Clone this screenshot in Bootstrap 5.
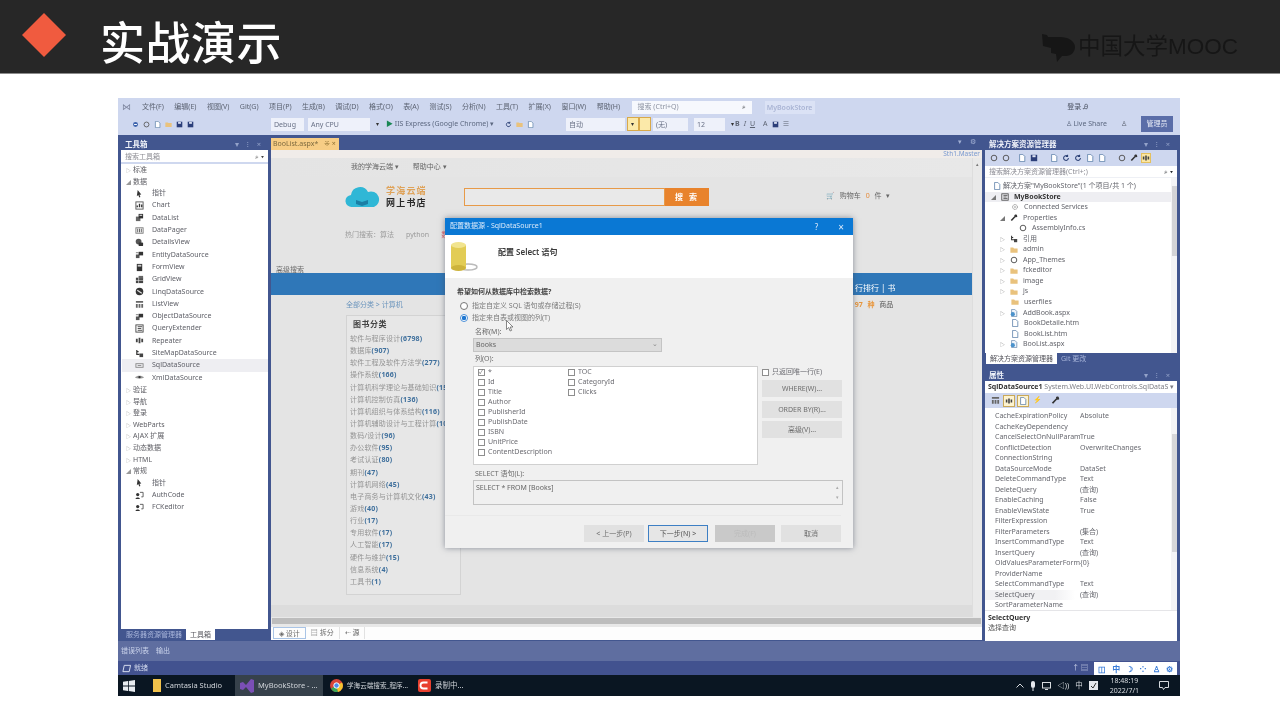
<!DOCTYPE html>
<html lang="zh-CN">
<head>
<meta charset="utf-8">
<title>实战演示</title>
<link href="https://cdn.jsdelivr.net/npm/bootstrap@5.3.0/dist/css/bootstrap.min.css" rel="stylesheet">
<style>
html,body{margin:0;height:720px;overflow:hidden;background:#fff}
body{font-family:"Noto Sans","Noto Sans CJK SC",sans-serif;font-size:7px;line-height:1.2;color:#555}
svg{display:block;flex:none}
.slide-head{height:74px;background:#272727;border-bottom:1px solid #8b8b8b;padding-left:22px;filter:blur(.5px)}
.rhomb{width:44px;height:44px;flex:none;background:#f05b3f;clip-path:polygon(50% 0,100% 50%,50% 100%,0 50%);margin-right:34px;margin-top:-3px}
.slide-title{font-family:"Noto Sans CJK SC",sans-serif;font-size:45px;font-weight:500;line-height:1;color:#fff;letter-spacing:.5px;margin-top:8px}
.wmark{margin-left:auto;margin-right:42px;margin-top:20px;color:#161616;font-family:"Liberation Sans","Noto Sans CJK SC",sans-serif;font-size:22.5px}
.vsw{position:relative;width:1062px;height:597px;margin:24px 0 0 118px;background:#42568f;filter:blur(.55px)}
.vs-menu{height:18px;background:#ced7ef;padding-left:4px}
.vs-menu .mi{margin-right:10.5px;color:#5c6372}
.vs-logo{width:10px;margin-right:10px;color:#7f87a0;font-size:9px}
.vs-search{width:120px;height:13px;background:#f6f8fd;margin-left:1px;padding:0 6px;color:#8d93a2}
.vs-proj{width:50px;height:13px;background:#dbe2f5;margin-left:13px;color:#a9b4d4;text-align:center;line-height:13px;font-weight:600}
.vs-login{margin-left:auto;margin-right:92px;color:#4e5565}
.vs-tool{height:19px;background:#ced7ef;padding:0 0 3px 14px;color:#5c6372}
.tcombo{height:13px;background:#eef1fa;padding:0 3px;line-height:13px;color:#687085;position:relative}
.tcombo::after{content:"▾";position:absolute;right:-9px;top:0;font-size:6px;color:#333}
.c-deb{width:33px;margin-left:73px}.c-cpu{width:62px;margin-left:4px;margin-right:16px}
.c-auto{width:59px;margin-left:28px;margin-right:2px}.c-none{width:35px;margin-left:2px;margin-right:6px}.c-size{width:31px;margin-right:10px}
.iis{width:114px;color:#5c6880}
.tg{width:7px;height:7px;margin-right:4px}
.tg2{margin-left:5px}
.tsel{height:14px;width:12px;background:#fbe9a9;border:1px solid #d8a94a}
.live{margin-left:auto;margin-right:14px;color:#5c6880}
.preview{width:32px;height:16px;background:#5a6da8;color:#e6eaf6;text-align:center;line-height:16px;margin-right:7px;margin-left:14px}
.vs-main{height:506px;padding:0 3px}
.dock-l{width:147px;margin-right:3px;background:#fff;flex:none}
.ptitle{height:15px;flex:none;background:#42568f;color:#eef1f9;font-weight:700;padding:4px 4px 0;font-size:7.5px;line-height:10px}
.ptitle b{margin-left:auto;font-weight:400;color:#93a2c9;letter-spacing:3px}
.psearch{height:14px;flex:none;background:#fff;border-bottom:2px solid #cfd8ef;padding:1px 4px 0;color:#8b8b92;line-height:11px}
.psearch i{margin-left:auto;font-style:normal;color:#444}
.tb-list{flex:1;background:#fff;padding-top:0;border-left:1px solid #fff}
.tb-cat{height:11.6px;line-height:11.6px;padding-left:4px;color:#5d5d63}
.tb-cat span{display:inline-block;width:7px;font-size:5px;color:#999}
.tb-it{height:12.3px;padding-left:13px;color:#5f6068}
.tb-it svg{width:9px;height:9px;margin-right:8px}
.tb-sel{background:#eeeef2}
.ptabs{height:12px;flex:none;background:#42568f;line-height:12px;padding-left:1px}
.ptabs span{padding:1px 4px 0;color:#a8b5da;height:11px;line-height:10px}
.ptabs .on{background:#fff;color:#55555c}
.center{width:711px;flex:none;background:#42568f}
.tabrow{height:15px;padding-top:3px;flex:none}
.doc-tab{width:68px;height:12px;background:#f7cd85;padding-left:2px;color:#7d6a3f;line-height:12px}
.doc-tab b{font-weight:400;margin-left:6px;color:#8d6f32}
.tab-r{margin-left:auto;color:#a2b0d4;letter-spacing:3px;margin-right:3px}
.strip{height:8px;flex:none;background:#f0ece9;text-align:right;color:#7a9ad0;padding-right:2px;line-height:8px;font-size:6.5px}
.design{height:459px;flex:none;background:#e4e4e4}
.webpg{flex:1;overflow:hidden}
.vscroll{width:10px;background:#e9e9e9;border-left:1px solid #ddd;text-align:center;color:#777;font-size:5px;padding-top:3px}
.w-top{height:19px;flex:none;padding-left:80px;color:#666;background:linear-gradient(90deg,#e4e4e4,#e8e8e8)}
.w-top span{margin-right:14px}
.w-logo{height:29px;flex:none;padding-left:74px;margin-top:5px}
.w-names{margin-left:5px;width:78px;font-weight:700;font-size:9px;line-height:12px;letter-spacing:1.2px;font-family:"Noto Sans CJK SC",sans-serif}
.w-names em{font-style:normal;color:#dfa35a;display:block}
.w-names u{text-decoration:none;color:#2a2a2a;display:block}
.w-input{width:201px;height:18px;border:1px solid #e79a48;background:#e9e9e9}
.w-btn{width:44px;height:18px;background:#e8832c;color:#fff;text-align:center;line-height:18px;font-weight:700;font-size:8px;letter-spacing:2px}
.w-cart{margin-left:117px;color:#666;font-size:7px;word-spacing:3px}
.w-cart i{font-style:normal;color:#e58a3a}
.w-hot{height:10px;flex:none;margin-top:20px;padding-left:74px;color:#9a9a9a}
.w-hot span{margin-right:12px}
.w-hot .red{color:#e0606a}
.w-adv{height:10px;flex:none;margin-top:24px;padding-left:5px;color:#6a6a6a;line-height:10px;margin-bottom:-2px}
.w-band{height:22px;flex:none;background:#2f77b8;color:#fff;font-size:8px;padding-left:584px;line-height:30px;overflow:hidden}
.w-sub{padding-left:75px;height:20px;flex:none;color:#6b95bd;line-height:19px}
.w-sub2{margin-left:452px;color:#555;word-spacing:3px}
.w-sub2 b{color:#e8963c;font-weight:700}
.w-box{margin-left:75px;width:115px;height:280px;flex:none;border:1px solid #d3d3d3;padding:2px 0 0 3px;background:#e7e7e7;overflow:hidden}
.w-box h6{font-size:8px;margin:0 0 3px 3px;font-weight:700;color:#444;line-height:12px;font-family:"Noto Sans CJK SC",sans-serif;letter-spacing:.5px}
.w-box div{height:12.15px;white-space:nowrap;color:#949494;line-height:12.15px;letter-spacing:.2px}
.w-box b{color:#3e6f9c;font-weight:700}
.w-foot{margin-top:auto;height:12px;flex:none;background:#dcdcdc}
.hsc{height:10px;flex:none;background:#e8e8e8;padding:1px 1px 3px;color:#777;font-size:5px}
.hsc i{display:block;width:100%;height:6px;background:#bdbdbd}
.dtabs{height:13px;flex:none;background:#fdfdfd;padding-left:2px;color:#6a6a6a}
.dtabs span{padding:0 5px;height:12px;line-height:11px;border-right:1px solid #e2e2e2}
.dtabs .on{border:1px solid #a9c4e6}
.dock-r{width:192px;margin-left:3px;flex:none}
.sol{height:203px;flex:none;background:#fff}
.st-bar{height:16px;flex:none;background:#ced7ef;padding-left:5px}
.st-bar svg{width:8px;height:8px;margin-right:4px}
.st-on{background:#fbe6a3;outline:1px solid #e4c05f}
.psearch2{height:12px;flex:none;background:#fff;padding:1px 4px 0;line-height:10px;color:#8c8c94;border-bottom:1px solid #eef0f5}
.tree{flex:1;position:relative;overflow:hidden;padding-top:3px}
.tr{height:10.55px;line-height:10.55px;color:#63646b;white-space:nowrap}
.tr>i{display:inline-block;font-style:normal;width:7px;color:#777;font-size:5px;text-align:center}
.tr svg{width:8px;height:8px;margin-right:5px}
.ind1{padding-left:5px}.ind2{padding-left:14px}.ind3{padding-left:26px}
.sol-r{padding-left:8px}.sol-r svg{margin-right:2px}
.tr-sel{background:#eeeef2;color:#333;font-weight:700}
.tr-scr{position:absolute;right:0;top:0;bottom:0;width:6px;background:#f4f4f6}
.tr-scr i{position:absolute;left:1px;top:8px;width:5px;height:70px;background:#d3d3d6}
.gap4{height:3px;flex:none}
.ptabs2{height:11px;line-height:10px}
.ptitle2{height:14px;padding-top:3px}
.prop{height:260px;flex:none;background:#fff}
.pr-combo{height:12px;flex:none;padding:0 3px;line-height:12px;white-space:nowrap;overflow:hidden;color:#7d7e85}
.pr-combo b{color:#333}
.pr-bar{height:15px;flex:none;background:#ced7ef;padding-left:4px}
.pr-bar span{display:flex;align-items:center;justify-content:center;width:12px;height:12px;margin-right:2px}
.pr-bar .on{background:#fdf3d0;border:1px solid #c9a95a}
.pr-grid{height:202px;flex:none;overflow:hidden;position:relative;padding-top:3px}
.pr-row{height:10.5px;line-height:10.5px;padding-left:10px;color:#66676e;white-space:nowrap}
.pr-row span:first-child{width:85px;flex:none}
.pr-sel{background:linear-gradient(90deg,#f1f1f3,#f1f1f3 70px,#fff 90px)}
.pr-sc{position:absolute;right:0;top:0;bottom:0;width:6px;background:#f4f4f6}
.pr-sc i{position:absolute;left:1px;top:26px;width:5px;height:118px;background:#d6d6d9}
.pr-desc{flex:1;border-top:1px solid #e5e5e8;padding:2px 3px;color:#555;line-height:10px}
.pr-desc b{display:block;color:#333;font-weight:700}
.bot-row{height:20px;background:#5f6ea0;color:#c9d2ea;padding-left:3px}
.bot-row span{margin-right:7px}
.stat{height:14px;background:#42528f;color:#d5dcf0;padding-left:4px}
.stat svg{width:9px;height:9px;margin-right:3px}
.ime{width:83px;height:13px;background:#fff;margin-right:3px;justify-content:space-between;padding:0 4px;color:#3b7dd8;font-weight:700;font-size:8px;line-height:13px}
.stat .upa{margin-left:auto;color:#d5dcf0;margin-right:6px}
.taskbar{height:21px;background:#0a1622;color:#d0d4d9;padding-left:5px;font-size:7.5px}
.tk{height:21px;padding:0 3px;white-space:nowrap;flex:none}
.tk svg{margin-right:4px}
.tk1{width:100px;padding-left:18px}
.tk2{width:88px;background:#36414b;padding-left:5px}
.tk3{width:95px;padding-left:7px;font-size:6.6px}
.tk4{width:60px;padding-left:0}
.tray{margin-left:auto;gap:6px;margin-right:11px;color:#d6dade}
.clock{text-align:center;line-height:10px;font-size:7px;margin:0 14px 0 6px}
.dlg{position:absolute;left:327px;top:120px;width:408px;height:330px;background:#f0f0f0;box-shadow:0 0 6px rgba(60,70,90,.55);color:#555}
.dlg-t{height:17px;flex:none;background:#0a78d4;color:#dbeafa;padding:0 9px 0 5px}
.dlg-t i{margin-left:auto;font-style:normal;font-size:8px}
.dlg-t em{font-style:normal;margin-left:20px;font-size:10px}
.dlg-h{height:43px;flex:none;background:#fff;padding-left:5px;color:#3a3a3a;font-size:8px;font-weight:600}
.dlg-h svg{width:32px;height:32px;margin-right:16px}
.dlg-h span{margin-bottom:10px}
.dlg-b{padding:9px 0 0 12px;height:270px;flex:none}
.q{height:10px;line-height:10px;font-weight:700;color:#444;margin-bottom:3px}
.rad{height:12px;padding-left:3px;color:#7b7b7b}
.rc{width:8px;height:8px;border:1px solid #777;border-radius:50%;margin-right:4px;background:#fff;flex:none}
.rc.on{border-color:#4a90d9;background:radial-gradient(circle,#1f77d0 0 2px,#fff 2.4px)}
.ind{margin-left:16px}
.lb{height:10px;line-height:10px;margin-top:3px;color:#6b6b6b;margin-left:2px}
.lb2{margin-top:2px}
.lb3{margin-top:4px;margin-bottom:1px}
.sel-b{width:189px;height:14px;background:#dcdcdc;border:1px solid #c4c4c4;margin-top:1px;padding:0 2px;line-height:12px;color:#666;position:relative}
.sel-b::after{content:"⌄";position:absolute;right:3px;top:-1px;color:#888}
.lst-wrap{margin-top:2px;height:99px}
.lst{width:285px;height:99px;background:#fff;border:1px solid #d0d0d0;padding:0 0 0 4px}
.lst-c{width:90px}
.ck{height:10px;line-height:10px;color:#6c6c72;white-space:nowrap}
.ck i{display:block;width:7px;height:7px;border:1px solid #8e8e8e;margin-right:3px;background:#fff;font-style:normal;color:#666;font-size:6px;line-height:5px}
.rcol{margin-left:4px;width:81px}
.rcol .ck{margin-top:1px;margin-bottom:3px}
.dbtn{display:block;width:80px;height:17px;margin-bottom:3.5px;background:#e1e1e1;border:0;border-radius:0;padding:0;font-size:7px;line-height:17px;color:#6e6e6e}
.ta{width:370px;height:25px;background:#f0f0f0;border:1px solid #c3c3c3;padding:2px;color:#666;line-height:9px;position:relative}
.ta i{position:absolute;right:3px;font-style:normal;font-size:5px;color:#aaa}
.ta .t1{top:2px}.ta .t2{bottom:2px}
.sep{height:1px;background:#e9e9e9;margin:10px 12px 9px -12px}
.dfoot{margin-left:127px;gap:4px}
.nbtn{width:60px;height:17px;background:#e1e1e1;border:0;border-radius:0;padding:0;font-size:7px;line-height:17px;color:#6e6e6e}
.nbtn.pri{border:1px solid #3d7fc4;line-height:15px;color:#555;background:#e6e6e6}
.nbtn.dis{background:#c9c9c9;color:#bcbcbc;margin-left:3px}
.nbtn.can{margin-left:2px}
.cursor{position:absolute;left:61px;top:102px;width:8px;height:12px}
</style>
</head>
<body>
<svg width="0" height="0" class="position-absolute">
<defs>
<symbol id="i-ptr" viewBox="0 0 10 10"><path d="M3 1l4 5-2 .3L6 9 4.800 9.400 3.600 6.600 2 8z" fill="#333"/></symbol>
<symbol id="i-chart" viewBox="0 0 10 10"><rect x="1" y="1" width="8" height="8" fill="none" stroke="#555"/><path d="M2.500 7V5M5 7V3M7.500 7V4" stroke="#333" stroke-width="1.500"/></symbol>
<symbol id="i-list" viewBox="0 0 10 10"><rect x="1" y="4" width="5" height="5" fill="#666"/><rect x="4" y="1" width="5" height="5" fill="#333"/><rect x="5" y="2" width="3" height="1" fill="#fff"/></symbol>
<symbol id="i-pager" viewBox="0 0 10 10"><rect x="1" y="2" width="8" height="6" fill="none" stroke="#777"/><path d="M3 3v4M5 3v4M7 3v4" stroke="#555"/></symbol>
<symbol id="i-detail" viewBox="0 0 10 10"><circle cx="4" cy="4" r="3.200" fill="#555"/><rect x="4" y="5" width="5" height="4" rx="1" fill="#333"/></symbol>
<symbol id="i-ent" viewBox="0 0 10 10"><rect x="1" y="5" width="4" height="4" fill="#555"/><rect x="4" y="2" width="5" height="4" fill="#333"/><path d="M1 3h3" stroke="#777"/></symbol>
<symbol id="i-form" viewBox="0 0 10 10"><rect x="2" y="1" width="6" height="8" fill="#333"/><rect x="3" y="2" width="4" height="2" fill="#ccc"/></symbol>
<symbol id="i-grid" viewBox="0 0 10 10"><rect x="1" y="3" width="8" height="6" fill="#444"/><rect x="4" y="1" width="5" height="3" fill="#666"/><path d="M1 6h8M4 3v6" stroke="#fff" stroke-width=".6"/></symbol>
<symbol id="i-linq" viewBox="0 0 10 10"><circle cx="5" cy="5" r="4.200" fill="#333"/><path d="M2.500 3.500L7.500 7" stroke="#ddd" stroke-width="1.400"/></symbol>
<symbol id="i-lv" viewBox="0 0 10 10"><path d="M1 1h8v2H1zM1 4.500h2v4H1zM4 4.500h2v4H4zM7 4.500h2v4H7z" fill="#666"/></symbol>
<symbol id="i-qe" viewBox="0 0 10 10"><rect x="1" y="1" width="8" height="8" fill="none" stroke="#444"/><path d="M3 3h5M3 5h4M3 7h5" stroke="#444"/></symbol>
<symbol id="i-rep" viewBox="0 0 10 10"><path d="M1 3h2v4H1zM4 2h2v6H4zM7 3h2v4H7z" fill="#444"/></symbol>
<symbol id="i-site" viewBox="0 0 10 10"><path d="M2 1v5h3M2 3h2" fill="none" stroke="#333" stroke-width="1.300"/><rect x="5" y="5" width="4" height="4" fill="#444"/></symbol>
<symbol id="i-sql" viewBox="0 0 10 10"><rect x="1" y="3" width="8" height="4" fill="none" stroke="#888"/><path d="M3 5h4" stroke="#888"/></symbol>
<symbol id="i-xml" viewBox="0 0 10 10"><path d="M0 5c2-2.500 8-2.500 10 0-2 1.500-8 1.500-10 0z" fill="#999"/><circle cx="5" cy="4.500" r="1.300" fill="#333"/></symbol>
<symbol id="i-uc" viewBox="0 0 10 10"><circle cx="3" cy="4" r="1.800" fill="#333"/><path d="M.5 9c0-2.500 5-2.500 5 0z" fill="#333"/><path d="M5.500 1.500h3.500v5H7" fill="none" stroke="#555"/></symbol>
<symbol id="i-folder" viewBox="0 0 10 10"><path d="M.5 2h3.500l1 1h4.500v5.500H.5z" fill="#e9c27d"/></symbol>
<symbol id="i-page" viewBox="0 0 10 10"><path d="M2 .5h4l2.500 2.500v6.500H2z" fill="#fff" stroke="#5a7fa8"/></symbol>
<symbol id="i-aspx" viewBox="0 0 10 10"><path d="M2 .5h4l2.500 2.500v6.500H2z" fill="#eef4fb" stroke="#6f8fb3"/><circle cx="3.500" cy="6.500" r="2.600" fill="#4a92cc"/></symbol>
<symbol id="i-wrench" viewBox="0 0 10 10"><path d="M8.800 1.200L7 3 6 2.500l-.3-1C7 .6 8 .6 8.800 1.200zM5.700 2.400l1.300 1.300-4.600 5L.9 7.400z" fill="#333"/><path d="M6 .8a2.400 2.400 0 0 1 3 3l-2 .3-1.500-1.500z" fill="#333"/></symbol>
<symbol id="i-theme" viewBox="0 0 10 10"><circle cx="5" cy="5" r="3.500" fill="none" stroke="#555" stroke-width="1.200"/></symbol>
<symbol id="i-gear" viewBox="0 0 10 10"><circle cx="5" cy="5" r="3" fill="none" stroke="#8b8b8b" stroke-width="1.200" stroke-dasharray="1.500 .7"/><circle cx="5" cy="5" r="1" fill="#8b8b8b"/></symbol>
<symbol id="i-circ" viewBox="0 0 10 10"><circle cx="5" cy="5" r="3.500" fill="#3d63ad"/><rect x="3" y="4.300" width="4" height="1.400" fill="#fff"/></symbol>
<symbol id="i-refresh" viewBox="0 0 10 10"><path d="M8 5a3 3 0 1 1-1-2.200M7 1v2.200H4.800" fill="none" stroke="#2a3f74" stroke-width="1.300"/></symbol>
<symbol id="i-save" viewBox="0 0 10 10"><rect x="1" y="1" width="8" height="8" fill="#2c3f7a"/><rect x="3" y="1.500" width="4" height="2.500" fill="#dfe5f5"/></symbol>
<symbol id="i-win" viewBox="0 0 12 12"><path d="M0 1.800L5 1v4.600H0zM5.800.9L12 0v5.600H5.800zM0 6.400h5V11L0 10.200zM5.800 6.400H12V12l-6.200-.9z" fill="#e8ecf1"/></symbol>
<symbol id="i-stat" viewBox="0 0 10 10"><path d="M2.500 1.500h7l-1.500 7h-7z" fill="none" stroke="#e6ebf8"/></symbol>
</defs>
</svg>

<header class="slide-head d-flex align-items-center">
  <div class="rhomb"></div>
  <div class="slide-title">实战演示</div>
  <div class="wmark d-flex align-items-center">
    <svg width="37" height="30" viewBox="0 0 37 30"><path d="M1 2l5 1 1 2h12c8 0 15 4 15 10 0 5-4 9-9 9h-4l-5 6-1-8-5-1v-5l-8-2z" fill="#161616"/></svg>
    <span>中国大学MOOC</span>
  </div>
</header>

<main class="vsw">
  <div class="vs-menu d-flex align-items-center">
    <div class="vs-logo">⋈</div>
    <span class="mi">文件(F)</span><span class="mi">编辑(E)</span><span class="mi">视图(V)</span><span class="mi">Git(G)</span><span class="mi">项目(P)</span><span class="mi">生成(B)</span><span class="mi">调试(D)</span><span class="mi">格式(O)</span><span class="mi">表(A)</span><span class="mi">测试(S)</span><span class="mi">分析(N)</span><span class="mi">工具(T)</span><span class="mi">扩展(X)</span><span class="mi">窗口(W)</span><span class="mi">帮助(H)</span>
    <div class="vs-search d-flex align-items-center">搜索 (Ctrl+Q)<span class="ms-auto text-dark">⌕</span></div>
    <div class="vs-proj">MyBookStore</div>
    <div class="vs-login">登录 Ꭿ</div>
  </div>

  <div class="vs-tool d-flex align-items-center">
    <svg class="tg"><use href="#i-circ"/></svg><svg class="tg"><use href="#i-theme"/></svg>
    <svg class="tg"><use href="#i-page"/></svg><svg class="tg"><use href="#i-folder"/></svg><svg class="tg"><use href="#i-save"/></svg><svg class="tg"><use href="#i-save"/></svg>
    <div class="tcombo c-deb">Debug</div>
    <div class="tcombo c-cpu">Any CPU</div>
    <div class="iis"><span class="text-success">▶</span> IIS Express (Google Chrome) ▾</div>
    <svg class="tg tg2"><use href="#i-refresh"/></svg><svg class="tg"><use href="#i-folder"/></svg><svg class="tg"><use href="#i-page"/></svg>
    <div class="tcombo c-auto">自动</div>
    <div class="tsel"></div><div class="tsel"></div>
    <div class="tcombo c-none">(无)</div>
    <div class="tcombo c-size">12</div>
    <b class="me-1">B</b><i class="me-1">I</i><u class="me-2">U</u><span class="me-1">A</span><svg class="tg"><use href="#i-save"/></svg><span>≡</span>
    <div class="live">♙ Live Share</div><span>♙</span>
    <div class="preview">管理员</div>
  </div>

  <div class="vs-main d-flex">
    <aside class="dock-l d-flex flex-column">
      <div class="ptitle d-flex">工具箱<b>▾ ⁝ ×</b></div>
      <div class="psearch d-flex">搜索工具箱<i>⌕ ▾</i></div>
      <div class="tb-list">
        <div class="tb-cat"><span>▷</span>标准</div>
        <div class="tb-cat"><span>◢</span>数据</div>
        <div class="tb-it d-flex align-items-center"><svg><use href="#i-ptr"/></svg>指针</div>
        <div class="tb-it d-flex align-items-center"><svg><use href="#i-chart"/></svg>Chart</div>
        <div class="tb-it d-flex align-items-center"><svg><use href="#i-list"/></svg>DataList</div>
        <div class="tb-it d-flex align-items-center"><svg><use href="#i-pager"/></svg>DataPager</div>
        <div class="tb-it d-flex align-items-center"><svg><use href="#i-detail"/></svg>DetailsView</div>
        <div class="tb-it d-flex align-items-center"><svg><use href="#i-ent"/></svg>EntityDataSource</div>
        <div class="tb-it d-flex align-items-center"><svg><use href="#i-form"/></svg>FormView</div>
        <div class="tb-it d-flex align-items-center"><svg><use href="#i-grid"/></svg>GridView</div>
        <div class="tb-it d-flex align-items-center"><svg><use href="#i-linq"/></svg>LinqDataSource</div>
        <div class="tb-it d-flex align-items-center"><svg><use href="#i-lv"/></svg>ListView</div>
        <div class="tb-it d-flex align-items-center"><svg><use href="#i-ent"/></svg>ObjectDataSource</div>
        <div class="tb-it d-flex align-items-center"><svg><use href="#i-qe"/></svg>QueryExtender</div>
        <div class="tb-it d-flex align-items-center"><svg><use href="#i-rep"/></svg>Repeater</div>
        <div class="tb-it d-flex align-items-center"><svg><use href="#i-site"/></svg>SiteMapDataSource</div>
        <div class="tb-it tb-sel d-flex align-items-center"><svg><use href="#i-sql"/></svg>SqlDataSource</div>
        <div class="tb-it d-flex align-items-center"><svg><use href="#i-xml"/></svg>XmlDataSource</div>
        <div class="tb-cat"><span>▷</span>验证</div>
        <div class="tb-cat"><span>▷</span>导航</div>
        <div class="tb-cat"><span>▷</span>登录</div>
        <div class="tb-cat"><span>▷</span>WebParts</div>
        <div class="tb-cat"><span>▷</span>AJAX 扩展</div>
        <div class="tb-cat"><span>▷</span>动态数据</div>
        <div class="tb-cat"><span>▷</span>HTML</div>
        <div class="tb-cat"><span>◢</span>常规</div>
        <div class="tb-it d-flex align-items-center"><svg><use href="#i-ptr"/></svg>指针</div>
        <div class="tb-it d-flex align-items-center"><svg><use href="#i-uc"/></svg>AuthCode</div>
        <div class="tb-it d-flex align-items-center"><svg><use href="#i-uc"/></svg>FCKeditor</div>
      </div>
      <div class="ptabs d-flex"><span>服务器资源管理器</span><span class="on">工具箱</span></div>
    </aside>

    <section class="center d-flex flex-column">
      <div class="tabrow d-flex">
        <div class="doc-tab">BooList.aspx*<b>⁜ ×</b></div>
        <div class="tab-r">▾ ⚙</div>
      </div>
      <div class="strip">Sth1.Master</div>
      <div class="design d-flex">
        <div class="webpg d-flex flex-column">
          <div class="w-top d-flex align-items-center"><span>我的学海云端 ▾</span><span>帮助中心 ▾</span></div>
          <div class="w-logo d-flex align-items-center">
            <svg width="36" height="22" viewBox="0 0 36 22"><path d="M7 21a6 6 0 0 1-1-12 9 9 0 0 1 17-3 7 7 0 0 1 6 15z" fill="#2fb7d6"/><path d="M11 14l6 2 6-2v4l-6 2-6-2z" fill="#1a7fa5"/></svg>
            <div class="w-names"><em>学海云端</em><u>网上书店</u></div>
            <div class="w-input"></div><div class="w-btn">搜 索</div>
            <div class="w-cart">🛒 购物车 <i>0</i> 件 ▾</div>
          </div>
          <div class="w-hot d-flex"><span>热门搜索：算法</span><span>python</span><span class="red">数字</span></div>
          <div class="w-adv">高级搜索</div>
          <div class="w-band">行排行 | 书</div>
          <div class="w-sub d-flex"><span>全部分类 &gt; 计算机</span><span class="w-sub2"><b>97 种</b> 商品</span></div>
          <div class="w-box">
            <h6>图书分类</h6>
            <div>软件与程序设计<b>(6798)</b></div>
            <div>数据库<b>(907)</b></div>
            <div>软件工程及软件方法学<b>(277)</b></div>
            <div>操作系统<b>(166)</b></div>
            <div>计算机科学理论与基础知识<b>(158)</b></div>
            <div>计算机控制仿真<b>(136)</b></div>
            <div>计算机组织与体系结构<b>(116)</b></div>
            <div>计算机辅助设计与工程计算<b>(103)</b></div>
            <div>数码/设计<b>(96)</b></div>
            <div>办公软件<b>(95)</b></div>
            <div>考试认证<b>(80)</b></div>
            <div>期刊<b>(47)</b></div>
            <div>计算机网络<b>(45)</b></div>
            <div>电子商务与计算机文化<b>(43)</b></div>
            <div>游戏<b>(40)</b></div>
            <div>行业<b>(17)</b></div>
            <div>专用软件<b>(17)</b></div>
            <div>人工智能<b>(17)</b></div>
            <div>硬件与维护<b>(15)</b></div>
            <div>信息系统<b>(4)</b></div>
            <div>工具书<b>(1)</b></div>
          </div>
          <div class="w-foot"></div>
        </div>
        <div class="vscroll">▴</div>
      </div>
      <div class="hsc"><i></i></div>
      <div class="dtabs d-flex"><span class="on">◈ 设计</span><span>▤ 拆分</span><span>⇠ 源</span></div>
    </section>

    <aside class="dock-r d-flex flex-column">
      <div class="ptitle d-flex">解决方案资源管理器<b>▾ ⁝ ×</b></div>
      <div class="sol d-flex flex-column">
        <div class="st-bar d-flex align-items-center"><svg><use href="#i-theme"/></svg><svg><use href="#i-theme"/></svg><svg class="ms-1"><use href="#i-page"/></svg><svg><use href="#i-save"/></svg><svg class="ms-2"><use href="#i-page"/></svg><svg><use href="#i-refresh"/></svg><svg><use href="#i-refresh"/></svg><svg><use href="#i-page"/></svg><svg><use href="#i-page"/></svg><svg class="ms-2"><use href="#i-theme"/></svg><svg><use href="#i-wrench"/></svg><svg class="st-on"><use href="#i-rep"/></svg></div>
        <div class="psearch2 d-flex">搜索解决方案资源管理器(Ctrl+;)<i class="ms-auto fst-normal text-dark">⌕ ▾</i></div>
        <div class="tree">
          <div class="tr sol-r d-flex align-items-center"><svg><use href="#i-page"/></svg>解决方案"MyBookStore"(1 个项目/共 1 个)</div>
          <div class="tr tr-sel ind1 d-flex align-items-center"><i>◢</i><svg class="ms-1"><use href="#i-qe"/></svg>MyBookStore</div>
          <div class="tr ind3 d-flex align-items-center"><svg><use href="#i-gear"/></svg>Connected Services</div>
          <div class="tr ind2 d-flex align-items-center"><i>◢</i><svg class="ms-1"><use href="#i-wrench"/></svg>Properties</div>
          <div class="tr ind3 d-flex align-items-center"><svg class="ms-2"><use href="#i-theme"/></svg>AssemblyInfo.cs</div>
          <div class="tr ind2 d-flex align-items-center"><i>▷</i><svg class="ms-1"><use href="#i-site"/></svg>引用</div>
          <div class="tr ind2 d-flex align-items-center"><i>▷</i><svg class="ms-1"><use href="#i-folder"/></svg>admin</div>
          <div class="tr ind2 d-flex align-items-center"><i>▷</i><svg class="ms-1"><use href="#i-theme"/></svg>App_Themes</div>
          <div class="tr ind2 d-flex align-items-center"><i>▷</i><svg class="ms-1"><use href="#i-folder"/></svg>fckeditor</div>
          <div class="tr ind2 d-flex align-items-center"><i>▷</i><svg class="ms-1"><use href="#i-folder"/></svg>image</div>
          <div class="tr ind2 d-flex align-items-center"><i>▷</i><svg class="ms-1"><use href="#i-folder"/></svg>js</div>
          <div class="tr ind3 d-flex align-items-center"><svg><use href="#i-folder"/></svg>userfiles</div>
          <div class="tr ind2 d-flex align-items-center"><i>▷</i><svg class="ms-1"><use href="#i-aspx"/></svg>AddBook.aspx</div>
          <div class="tr ind3 d-flex align-items-center"><svg><use href="#i-page"/></svg>BookDetaile.htm</div>
          <div class="tr ind3 d-flex align-items-center"><svg><use href="#i-page"/></svg>BookList.htm</div>
          <div class="tr ind2 d-flex align-items-center"><i>▷</i><svg class="ms-1"><use href="#i-aspx"/></svg>BooList.aspx</div>
          <div class="tr-scr"><i></i></div>
        </div>
      </div>
      <div class="ptabs ptabs2 d-flex"><span class="on">解决方案资源管理器</span><span>Git 更改</span></div>
      <div class="gap4"></div>
      <div class="ptitle ptitle2 d-flex">属性<b>▾ ⁝ ×</b></div>
      <div class="prop d-flex flex-column">
        <div class="pr-combo"><b>SqlDataSource1</b> System.Web.UI.WebControls.SqlDataS ▾</div>
        <div class="pr-bar d-flex align-items-center"><span><svg width="9" height="9"><use href="#i-lv"/></svg></span><span class="on"><svg width="8" height="8"><use href="#i-rep"/></svg></span><span class="on"><svg width="8" height="8"><use href="#i-page"/></svg></span><span class="text-warning fw-bold">⚡</span><span class="ms-1"><svg width="9" height="9"><use href="#i-wrench"/></svg></span></div>
        <div class="pr-grid">
          <div class="pr-row d-flex"><span>CacheExpirationPolicy</span><span>Absolute</span></div>
          <div class="pr-row d-flex"><span>CacheKeyDependency</span><span></span></div>
          <div class="pr-row d-flex"><span>CancelSelectOnNullParam</span><span>True</span></div>
          <div class="pr-row d-flex"><span>ConflictDetection</span><span>OverwriteChanges</span></div>
          <div class="pr-row d-flex"><span>ConnectionString</span><span></span></div>
          <div class="pr-row d-flex"><span>DataSourceMode</span><span>DataSet</span></div>
          <div class="pr-row d-flex"><span>DeleteCommandType</span><span>Text</span></div>
          <div class="pr-row d-flex"><span>DeleteQuery</span><span>(查询)</span></div>
          <div class="pr-row d-flex"><span>EnableCaching</span><span>False</span></div>
          <div class="pr-row d-flex"><span>EnableViewState</span><span>True</span></div>
          <div class="pr-row d-flex"><span>FilterExpression</span><span></span></div>
          <div class="pr-row d-flex"><span>FilterParameters</span><span>(集合)</span></div>
          <div class="pr-row d-flex"><span>InsertCommandType</span><span>Text</span></div>
          <div class="pr-row d-flex"><span>InsertQuery</span><span>(查询)</span></div>
          <div class="pr-row d-flex"><span>OldValuesParameterForm</span><span>{0}</span></div>
          <div class="pr-row d-flex"><span>ProviderName</span><span></span></div>
          <div class="pr-row d-flex"><span>SelectCommandType</span><span>Text</span></div>
          <div class="pr-row pr-sel d-flex"><span>SelectQuery</span><span>(查询)</span></div>
          <div class="pr-row d-flex"><span>SortParameterName</span><span></span></div>
          <div class="pr-sc"><i></i></div>
        </div>
        <div class="pr-desc"><b>SelectQuery</b>选择查询</div>
      </div>
    </aside>
  </div>

  <div class="bot-row d-flex align-items-center"><span>错误列表</span><span>输出</span></div>
  <div class="stat d-flex align-items-center">
    <svg><use href="#i-stat"/></svg>就绪
    <span class="upa">↑ ▤</span>
    <div class="ime d-flex"><span>◫</span><span>中</span><span>☽</span><span>⁘</span><span>♙</span><span>⚙</span></div>
  </div>
  <div class="taskbar d-flex align-items-center">
    <svg width="12" height="12"><use href="#i-win"/></svg>
    <div class="tk tk1 d-flex align-items-center"><svg width="8" height="13" viewBox="0 0 8 13"><path d="M0 0h8v13H0z" fill="#f2c24b"/></svg>Camtasia Studio</div>
    <div class="tk tk2 d-flex align-items-center"><svg width="14" height="14" viewBox="0 0 14 14"><path d="M0 4l3-1 3 3 5-6 3 1v12l-3 1-5-6-3 3-3-1z" fill="#7a4fb5"/></svg>MyBookStore - ...</div>
    <div class="tk tk3 d-flex align-items-center"><svg width="13" height="13" viewBox="0 0 13 13"><circle cx="6.500" cy="6.500" r="6.500" fill="#d9453a"/><path d="M6.500 6.500L1 9.500a6.500 6.500 0 0 0 7 3.500z" fill="#3aa757"/><path d="M6.500 6.500l5.500-3a6.500 6.500 0 0 1-4 9.500z" fill="#f4c430"/><circle cx="6.500" cy="6.500" r="2.700" fill="#4a8cf0" stroke="#fff"/></svg>学海云端搜索_程序...</div>
    <div class="tk tk4 d-flex align-items-center"><svg width="13" height="13" viewBox="0 0 13 13"><rect width="13" height="13" rx="2" fill="#e8402f"/><path d="M9.500 3.500h-4a3 3 0 0 0 0 6h4" fill="none" stroke="#fff" stroke-width="1.800"/></svg>录制中...</div>
    <div class="tray d-flex align-items-center">
      <svg width="8" height="5" viewBox="0 0 8 5"><path d="M.5 4.500L4 1l3.500 3.500" fill="none" stroke="#d6dade"/></svg>
      <svg width="6" height="10" viewBox="0 0 6 10"><rect x="1" y="0" width="4" height="7" rx="2" fill="#e6e9ee"/><path d="M3 7v3" stroke="#e6e9ee"/></svg>
      <svg width="9" height="8" viewBox="0 0 9 8"><rect x=".5" y=".5" width="8" height="5.500" fill="none" stroke="#d6dade"/><path d="M3 7.500h3" stroke="#d6dade"/></svg>
      <span>◁))</span><span>中</span>
      <svg width="9" height="9" viewBox="0 0 9 9"><rect width="9" height="9" fill="#e6e9ee"/><path d="M2 5l2 2 3-5" fill="none" stroke="#333"/></svg>
      <div class="clock">18:48:19<br>2022/7/1</div>
      <svg width="10" height="9" viewBox="0 0 10 9"><path d="M.5.500h9v6H6L4.500 8.500 3.500 6.500h-3z" fill="none" stroke="#d6dade"/></svg>
    </div>
  </div>

  <div class="dlg d-flex flex-column">
    <div class="dlg-t d-flex align-items-center">配置数据源 - SqlDataSource1<i>?</i><em>×</em></div>
    <div class="dlg-h d-flex align-items-center">
      <svg viewBox="0 0 32 32"><ellipse cx="18" cy="26" rx="9" ry="3" fill="none" stroke="#bbb" stroke-width="1.500"/><path d="M1 4h15v23H1z" fill="#e2cc55"/><ellipse cx="8.500" cy="4" rx="7.500" ry="3" fill="#f1e48f"/><ellipse cx="8.500" cy="27" rx="7.500" ry="3" fill="#cdb33c"/></svg>
      <span>配置 Select 语句</span>
    </div>
    <div class="dlg-b">
      <div class="q">希望如何从数据库中检索数据?</div>
      <div class="rad d-flex align-items-center"><span class="rc"></span>指定自定义 SQL 语句或存储过程(S)</div>
      <div class="rad d-flex align-items-center"><span class="rc on"></span>指定来自表或视图的列(T)</div>
      <div class="ind">
        <div class="lb">名称(M):</div>
        <div class="sel-b">Books</div>
        <div class="lb lb2">列(O):</div>
        <div class="lst-wrap d-flex">
          <div class="lst d-flex">
            <div class="lst-c">
              <div class="ck d-flex align-items-center"><i>✓</i>*</div>
              <div class="ck d-flex align-items-center"><i></i>Id</div>
              <div class="ck d-flex align-items-center"><i></i>Title</div>
              <div class="ck d-flex align-items-center"><i></i>Author</div>
              <div class="ck d-flex align-items-center"><i></i>PublisherId</div>
              <div class="ck d-flex align-items-center"><i></i>PublishDate</div>
              <div class="ck d-flex align-items-center"><i></i>ISBN</div>
              <div class="ck d-flex align-items-center"><i></i>UnitPrice</div>
              <div class="ck d-flex align-items-center"><i></i>ContentDescription</div>
            </div>
            <div class="lst-c">
              <div class="ck d-flex align-items-center"><i></i>TOC</div>
              <div class="ck d-flex align-items-center"><i></i>CategoryId</div>
              <div class="ck d-flex align-items-center"><i></i>Clicks</div>
            </div>
          </div>
          <div class="rcol">
            <div class="ck d-flex align-items-center"><i></i>只返回唯一行(E)</div>
            <button class="btn dbtn" type="button">WHERE(W)...</button>
            <button class="btn dbtn" type="button">ORDER BY(R)...</button>
            <button class="btn dbtn" type="button">高级(V)...</button>
          </div>
        </div>
        <div class="lb lb3">SELECT 语句(L):</div>
        <div class="ta">SELECT * FROM [Books]<i class="t1">▴</i><i class="t2">▾</i></div>
      </div>
      <div class="sep"></div>
      <div class="dfoot d-flex">
        <button class="btn nbtn" type="button">&lt; 上一步(P)</button>
        <button class="btn nbtn pri" type="button">下一步(N) &gt;</button>
        <button class="btn nbtn dis" type="button">完成(F)</button>
        <button class="btn nbtn can" type="button">取消</button>
      </div>
    </div>
    <svg class="cursor" viewBox="0 0 8 12"><path d="M.5.500v9l2.200-2 1.400 3.500 1.500-.6L4.200 7H7z" fill="#fff" stroke="#555" stroke-width=".7"/></svg>
  </div>
</main>
<script src="https://cdn.jsdelivr.net/npm/bootstrap@5.3.0/dist/js/bootstrap.bundle.min.js"></script>
</body>
</html>
